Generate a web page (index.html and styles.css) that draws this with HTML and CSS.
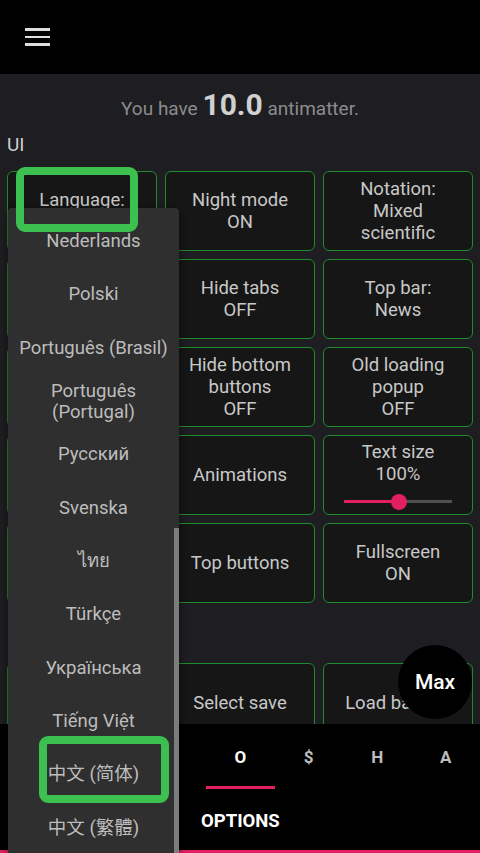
FILE: index.html
```html
<!DOCTYPE html>
<html lang="en">
<head>
    <meta charset="UTF-8">
    <meta name="viewport" content="width=device-width, initial-scale=1.0">
    <title>Antimatter Dimensions - Options</title>
    <link rel="stylesheet" href="styles.css">
</head>
<body>
    <div class="app">
        <header class="topbar">
            <button class="menu-btn" aria-label="Menu">
                <span></span>
                <span></span>
                <span></span>
            </button>
        </header>

        <main class="content">
            <p class="amount">You have <span class="amount-value">10.0</span> antimatter.</p>
            <h3 class="section-title">UI</h3>

            <div class="grid">
                <button class="option">Language:<br>English</button>
                <button class="option">Night mode<br>ON</button>
                <button class="option">Notation:<br>Mixed<br>scientific</button>

                <button class="option"></button>
                <button class="option">Hide tabs<br>OFF</button>
                <button class="option">Top bar:<br>News</button>

                <button class="option"></button>
                <button class="option">Hide bottom<br>buttons<br>OFF</button>
                <button class="option">Old loading<br>popup<br>OFF</button>

                <button class="option"></button>
                <button class="option">Animations</button>
                <div class="option slider-option">
                    <span>Text size<br>100%</span>
                    <div class="slider">
                        <div class="slider-track">
                            <div class="slider-fill"></div>
                        </div>
                        <div class="slider-thumb"></div>
                    </div>
                </div>

                <button class="option"></button>
                <button class="option">Top buttons</button>
                <button class="option">Fullscreen<br>ON</button>
            </div>

            <div class="grid saves">
                <button class="option"></button>
                <button class="option">Select save</button>
                <button class="option">Load backup</button>
            </div>
        </main>

        <nav class="tabbar">
            <div class="tabs">
                <div class="tab active">O</div>
                <div class="tab">$</div>
                <div class="tab">H</div>
                <div class="tab">A</div>
            </div>
            <div class="tab-title">OPTIONS</div>
        </nav>

        <!-- language picker opened over the grid -->
        <div class="dropdown">
            <ul class="dropdown-list">
                <li>Nederlands</li>
                <li>Polski</li>
                <li>Português (Brasil)</li>
                <li>Português (Portugal)</li>
                <li>Русский</li>
                <li>Svenska</li>
                <li>ไทย</li>
                <li>Türkçe</li>
                <li>Українська</li>
                <li>Tiếng Việt</li>
                <li>中文 (简体)</li>
                <li>中文 (繁體)</li>
            </ul>
            <div class="scroll-thumb"></div>
        </div>

        <button class="max-btn">Max</button>

        <div class="highlight highlight-language"></div>
        <div class="highlight highlight-chinese"></div>
    </div>
</body>
</html>
```

FILE: styles.css
```css
body {
    margin: 0;
    font-family: Roboto, "Noto Sans CJK SC", sans-serif;
    background-color: #1e1e22;
    color: #c8c8c8;
}
.app {
    position: relative;
    display: flex;
    flex-direction: column;
    height: 100vh;
    overflow: hidden;
}
.topbar {
    flex-shrink: 0;
    height: 74px;
    background: #000;
    display: flex;
    align-items: center;
    padding-left: 25px;
}
.menu-btn {
    display: flex;
    flex-direction: column;
    gap: 5px;
    width: 25px;
    padding: 0;
    background: none;
    border: none;
}
.menu-btn span {
    height: 2.5px;
    background: #ddd;
}
.content {
    flex: 1;
    overflow: hidden;
    padding: 0 7px;
}
.amount {
    margin: 13px 0 0;
    text-align: center;
    font-size: 19px;
    line-height: 36px;
    color: #8c8c8c;
}
.amount-value {
    font-size: 30px;
    font-weight: bold;
    color: #d0d0d0;
}
.section-title {
    margin: 6px 0 0;
    font-size: 19px;
    font-weight: normal;
    line-height: 24px;
    color: #cfcfcf;
}
.grid {
    display: grid;
    grid-template-columns: repeat(3, 1fr);
    gap: 8px;
    margin-top: 14px;
}
.grid.saves {
    margin-top: 60px;
}
.option {
    height: 80px;
    box-sizing: border-box;
    display: flex;
    align-items: center;
    justify-content: center;
    padding: 0 4px;
    background: #161616;
    border: 1px solid #1f8b2a;
    border-radius: 6px;
    color: #c8c8c8;
    font-family: inherit;
    font-size: 18.5px;
    line-height: 22px;
    text-align: center;
}
.slider-option {
    flex-direction: column;
}
.slider {
    position: relative;
    width: 108px;
    height: 16px;
    margin-top: 9px;
}
.slider-track {
    height: 3px;
    margin-top: 6.5px;
    background: #505050;
}
.slider-fill {
    width: 51%;
    height: 100%;
    background: #e21f63;
}
.slider-thumb {
    position: absolute;
    top: 0;
    left: 51%;
    width: 16px;
    height: 16px;
    margin-left: -8px;
    border-radius: 50%;
    background: #e21f63;
}
.tabbar {
    flex-shrink: 0;
    background: #000;
    border-bottom: 3px solid #e21f63;
}
.tabs {
    display: flex;
    padding-left: 206px;
}
.tab {
    width: 68.5px;
    height: 65px;
    display: flex;
    align-items: center;
    justify-content: center;
    font-size: 17px;
    font-weight: bold;
    color: #bdbdbd;
}
.tab.active {
    color: #fff;
    box-shadow: inset 0 -3px #e21f63;
}
.tab-title {
    height: 61px;
    display: flex;
    align-items: center;
    padding: 3px 0 0 201px;
    box-sizing: border-box;
    font-size: 18.5px;
    font-weight: bold;
    color: #fff;
}
.dropdown {
    position: absolute;
    top: 208px;
    left: 8px;
    bottom: 0;
    width: 171px;
    background: #2f2f2f;
    border-radius: 4px 4px 0 0;
    box-shadow: 0 2px 8px rgba(0, 0, 0, 0.5);
    overflow: hidden;
}
.dropdown-list {
    margin: 0;
    padding: 7px 0 0;
    list-style: none;
}
.dropdown-list li {
    height: 53.33px;
    display: flex;
    align-items: center;
    justify-content: center;
    padding: 0 7px;
    text-align: center;
    font-size: 18.5px;
    line-height: 21px;
    color: #bdbdbd;
}
.scroll-thumb {
    position: absolute;
    top: 320px;
    right: 0;
    bottom: 0;
    width: 5px;
    background: #7c7c7c;
}
.max-btn {
    position: absolute;
    top: 645px;
    left: 398px;
    width: 74px;
    height: 74px;
    border: none;
    border-radius: 50%;
    background: #000;
    color: #fff;
    font-family: inherit;
    font-size: 21px;
    font-weight: 500;
}
.highlight {
    position: absolute;
    box-sizing: border-box;
    border: 8px solid #3cc04f;
    border-radius: 9px;
}
.highlight-language {
    top: 167px;
    left: 16px;
    width: 122px;
    height: 65px;
}
.highlight-chinese {
    top: 736px;
    left: 39px;
    width: 130px;
    height: 67px;
}
```
